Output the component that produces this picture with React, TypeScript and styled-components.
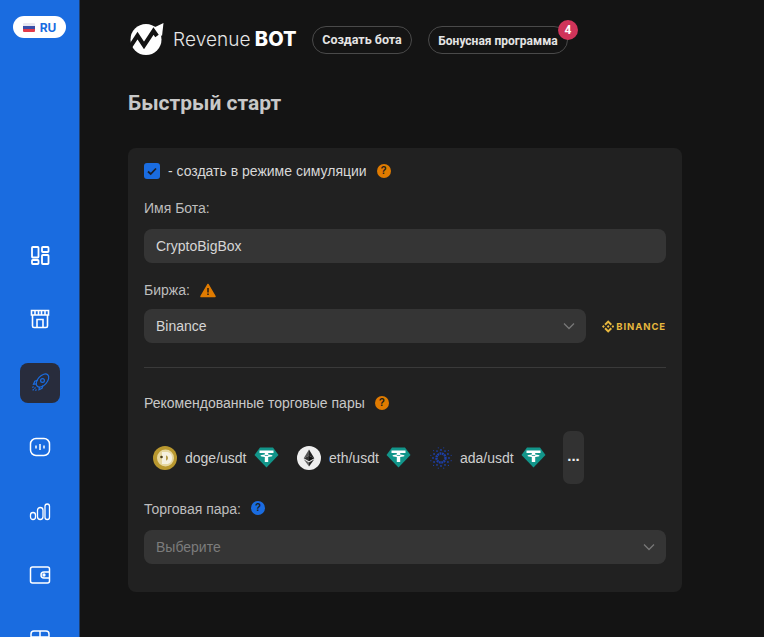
import React from "react";
import styled, { createGlobalStyle } from "styled-components";

const Global = createGlobalStyle`
  html, body { margin: 0; padding: 0; height: 100%; background: #141414; overflow: hidden; }
  #root { height: 100%; }
  * { box-sizing: border-box; }
`;

const Page = styled.div`
  display: flex;
  height: 637px;
  overflow: hidden;
  background: #141414;
  font-family: "Liberation Sans", Arial, sans-serif;
`;

const Sidebar = styled.aside`
  width: 80px;
  flex: none;
  height: 637px;
  overflow: hidden;
  background: #1a6ce0;
  border-right: 1px solid #1c3f73;
  padding-top: 16px;
  display: flex;
  flex-direction: column;
  align-items: center;
`;

const LangPill = styled.div`
  width: 53px;
  height: 22px;
  border-radius: 11px;
  background: #fff;
  display: flex;
  align-items: center;
  justify-content: center;
  gap: 5px;
  font: 700 12px "Inter", sans-serif;
  color: #1a6ce0;
  flex: none;
`;

const Flag = styled.span`
  width: 12px;
  height: 9px;
  border-radius: 1px;
  background: linear-gradient(#e8e8f0 0 33%, #3a4fa8 33% 66%, #e23a4a 66% 100%);
`;

const Nav = styled.nav`
  margin-top: 197px;
  display: flex;
  flex-direction: column;
  gap: 24px;
  flex: none;
`;

const NavItem = styled.div<{ $active?: boolean }>`
  width: 40px;
  height: 40px;
  border-radius: 8px;
  display: flex;
  align-items: center;
  justify-content: center;
  color: ${(p) => (p.$active ? "#1a6ce0" : "#fff")};
  background: ${(p) => (p.$active ? "#282c3c" : "transparent")};
`;

const Main = styled.main`
  flex: 1;
  min-width: 0;
  padding: 24px 0 0 48px;
`;

const Header = styled.header`
  display: flex;
  align-items: center;
  height: 30px;
`;

const Logo = styled.div`
  display: flex;
  align-items: center;
  width: 184px;
  flex: none;
  color: #fff;
`;

const LogoText = styled.span`
  margin-left: 9px;
  font: 300 19px/30px "Inter", sans-serif;
  color: #e6e6e6;
  letter-spacing: 0.1px;
  white-space: nowrap;
`;

const LogoBold = styled.b`
  font: 800 20px/30px "Inter", sans-serif;
  color: #fff;
  margin-left: 4px;
`;

const HeaderButton = styled.div`
  position: relative;
  height: 28px;
  margin-top: 1px;
  border: 1px solid #4a4a4a;
  border-radius: 14px;
  display: flex;
  align-items: center;
  justify-content: center;
  font: 700 12px "Roboto", sans-serif;
  color: #e4e4e4;
  white-space: nowrap;
`;

const CreateButton = styled(HeaderButton)`
  width: 100px;
  font-size: 12.5px;
`;

const BonusButton = styled(HeaderButton)`
  width: 140px;
  margin-left: 16px;
  padding-top: 2px;
`;

const Badge = styled.span`
  position: absolute;
  right: -11px;
  top: -7px;
  width: 20px;
  height: 20px;
  border-radius: 50%;
  background: #d0345a;
  color: #fff;
  font: 700 12px "Roboto", sans-serif;
  display: flex;
  align-items: center;
  justify-content: center;
`;

const Title = styled.h1`
  margin: 35px 0 0;
  font: 700 21px/28px "Roboto", sans-serif;
  color: #c8c8c8;
`;

const Card = styled.section`
  margin-top: 31px;
  width: 554px;
  height: 444px;
  background: #212121;
  border-radius: 8px;
  padding: 15px 16px 0;
  display: flex;
  flex-direction: column;
  color: #cfcfcf;
  font-size: 14px;
`;

const CheckRow = styled.div`
  display: flex;
  align-items: center;
  height: 16px;
  color: #d8d8d8;
`;

const CheckBox = styled.span`
  width: 16px;
  height: 16px;
  border-radius: 3px;
  background: #1a6ce0;
  display: flex;
  align-items: center;
  justify-content: center;
  margin-right: 8px;
  color: #1b1f2a;
`;

const Hint = styled.span<{ $blue?: boolean }>`
  width: 14px;
  height: 14px;
  border-radius: 50%;
  background: ${(p) => (p.$blue ? "#1a6ce0" : "#e07b00")};
  color: #1c1c1c;
  font: 700 10px/14px "Liberation Sans", sans-serif;
  text-align: center;
  flex: none;
  margin-top: ${(p) => (p.$blue ? "-2px" : "0")};
`;

const CheckHint = styled(Hint)`
  margin-left: 10px;
`;

const Label = styled.div`
  display: flex;
  align-items: center;
  gap: 10px;
  height: 16px;
  color: #bdbdbd;
`;

const NameLabel = styled(Label)`
  margin-top: 21px;
`;

const ExchangeLabel = styled(Label)`
  margin-top: 19px;
`;

const PairLabel = styled(Label)`
  margin-top: 17px;
`;

const Field = styled.div<{ $muted?: boolean }>`
  height: 34px;
  background: #353535;
  border-radius: 8px;
  padding: 0 12px;
  display: flex;
  align-items: center;
  justify-content: space-between;
  color: ${(p) => (p.$muted ? "#7c7c7c" : "#d6d6d6")};
`;

const NameField = styled(Field)`
  margin-top: 13px;
`;

const PairField = styled(Field)`
  margin-top: 13px;
`;

const ExchangeRow = styled.div`
  margin-top: 11px;
  display: flex;
  align-items: center;
  gap: 16px;
`;

const ExchangeField = styled(Field)`
  flex: 1;
`;

const Chevron = styled.span`
  color: #777;
  display: flex;
  margin-right: -2px;
`;

const BinanceLogo = styled.div`
  width: 64px;
  display: flex;
  align-items: center;
  gap: 2px;
  color: #e8b83e;
  font: 700 9.5px "Inter", sans-serif;
  letter-spacing: 0.9px;
  flex: none;
`;

const Divider = styled.hr`
  margin: 24px 0 0;
  border: 0;
  border-top: 1px solid #3a3a3a;
`;

const RecLabel = styled(Label)`
  margin-top: 27px;
  color: #c8c8c8;
`;

const Pairs = styled.div`
  margin-top: 20px;
  height: 53px;
  display: flex;
  align-items: center;
  padding-left: 9px;
`;

const Pair = styled.div<{ $w: number }>`
  width: ${(p) => p.$w}px;
  display: flex;
  align-items: center;
  flex: none;
  color: #cfcfcf;
`;

const PairName = styled.span`
  margin: 0 7px 0 8px;
  white-space: nowrap;
`;

const More = styled.div`
  width: 21px;
  height: 53px;
  border-radius: 7px;
  background: #323232;
  color: #eee;
  font: 700 15px/49px "Liberation Sans", sans-serif;
  text-align: center;
  flex: none;
`;

const icon = {
  width: 24,
  height: 24,
  viewBox: "0 0 24 24",
  fill: "none",
  stroke: "currentColor",
  strokeWidth: 1.5,
} as const;

const Dashboard = () => (
  <svg {...icon} strokeWidth={1.8}>
    <rect x="4" y="4" width="6.5" height="10.500" rx="0.800" />
    <rect x="14" y="4" width="6.500" height="5" rx="0.800" />
    <rect x="4" y="17" width="6.500" height="4" rx="0.800" />
    <rect x="14" y="12" width="6.500" height="9" rx="0.800" />
  </svg>
);

const Shop = () => (
  <svg {...icon} strokeWidth={1.6}>
    <path d="M3.500 3.500h17v4.500h-17z" />
    <path d="M7 3.500v4.500M10.500 3.500v4.500M13.500 3.500v4.500M17 3.500v4.500" />
    <path d="M4.500 8v11a1.500 1.500 0 0 0 1.500 1.500h12a1.500 1.500 0 0 0 1.500-1.500V8" />
    <path d="M9 20.500v-8h6v8" />
  </svg>
);

const Rocket = () => (
  <svg {...icon} strokeWidth={1.2}>
    <ellipse cx="14.500" cy="9.500" rx="4.600" ry="7.800" transform="rotate(42 14.500 9.500)" />
    <path d="M9.700 9.300 6.800 10.300l-1.300 3 3-.4M15 14.500l-1 2.800-3 1.500.4-3" />
    <circle cx="14.500" cy="9.500" r="1.900" />
    <path d="M7.500 16.500l-3.500 3.500M5.500 15.500l-1.500 1.500M8.500 18.500l-1.500 1.500" strokeDasharray="1.500 1" />
  </svg>
);

const Chat = () => (
  <svg {...icon}>
    <rect x="2.500" y="3.500" width="19" height="17" rx="5.500" />
    <path d="M8 10.500v3M12 9v6M16 10.500v3" />
  </svg>
);

const Bars = () => (
  <svg {...icon} strokeWidth={1.3}>
    <rect x="2.500" y="13.500" width="5" height="7" rx="2.500" />
    <rect x="9.500" y="8.500" width="5.500" height="12" rx="2.750" />
    <rect x="17" y="5" width="4.500" height="15.500" rx="2.250" />
  </svg>
);

const Wallet = () => (
  <svg {...icon}>
    <rect x="2.500" y="4" width="19" height="16" rx="2" />
    <path d="M21.500 9h-5.500a3 3 0 0 0 0 6h5.500" />
    <circle cx="16" cy="12" r="0.900" />
  </svg>
);

const Gift = () => (
  <svg {...icon}>
    <path d="M6 4h12a3 3 0 0 1 3 3v3H3V7a3 3 0 0 1 3-3z" />
    <path d="M4 10v11h16V10M12 4v17" />
  </svg>
);

const BrandMark = () => (
  <svg width="36" height="34" viewBox="0 0 36 34">
    <circle cx="18" cy="17.500" r="15.500" fill="#fff" />
    <path fill="#fff" d="M24 6.500 35.500 1 34 14z" />
    <path
      fill="none"
      stroke="#141414"
      strokeWidth="4.200"
      strokeLinejoin="miter"
      d="M0 28 9.500 13.500 16 23.500 25.500 9 29 14"
    />
  </svg>
);

const BinanceMark = () => (
  <svg width="13" height="13" viewBox="0 0 126.6 126.6" fill="currentColor">
    <path d="M38.700 53.200 63.300 28.600l24.600 24.600 14.300-14.300L63.300 0 24.400 38.900zM0 63.300l14.300-14.300 14.300 14.300-14.300 14.300zM38.700 73.400l24.600 24.600 24.600-24.600 14.300 14.300-38.900 38.900-38.900-38.900zM98 63.300l14.300-14.300 14.300 14.300-14.300 14.300zM77.800 63.300 63.300 48.800 52.600 59.500l-1.200 1.200-2.600 2.600 14.500 14.500z" />
  </svg>
);

const Warning = () => (
  <svg width="16" height="15" viewBox="0 0 16 15">
    <path fill="#e07b00" stroke="#e07b00" strokeLinejoin="round" strokeWidth="1.500" d="M8 1.500 1 13.500h14z" />
    <path stroke="#221a10" strokeWidth="1.500" d="M8 5v4.500M8 10.500v1.500" />
  </svg>
);

const Check = () => (
  <svg width="12" height="12" viewBox="0 0 12 12" fill="none" stroke="currentColor" strokeWidth="1.800">
    <path d="M2 6.500l2.700 2.500L10 3.500" />
  </svg>
);

const Down = () => (
  <svg width="14" height="14" viewBox="0 0 14 14" fill="none" stroke="currentColor" strokeWidth="1.300">
    <path d="M2 4.500l5 5 5-5" />
  </svg>
);

const Tether = () => (
  <svg width="25" height="21" viewBox="0 0 25 21">
    <path fill="#12958a" d="M6 .5h13l5.500 7.500L12.500 20.500.5 8z" />
    <path
      fill="#fff"
      d="M5.500 3.500h14v2.500h-5.300v1.500c2.400.1 4.300.6 4.300 1.200s-1.900 1.100-4.300 1.200v5.100h-3.400v-5.100c-2.400-.1-4.300-.6-4.300-1.200s1.900-1.100 4.300-1.200V6H5.500zM10.800 8.200v.8c.5 0 1.100.1 1.700.1s1.200 0 1.700-.1v-.8c-.5 0-1.100.1-1.700.1s-1.200 0-1.700-.1z"
    />
  </svg>
);

const Doge = () => (
  <svg width="24" height="24" viewBox="0 0 24 24">
    <circle cx="12" cy="12" r="12" fill="#b9982f" />
    <circle cx="12.500" cy="12" r="8.500" fill="#e6d7a0" />
    <path fill="#f5f0df" d="M9 6h4.500c3.500 0 5.500 2.500 5.500 6s-2 6-5.500 6H9z" />
    <path fill="#b59a48" d="M13 9.500c1.500.3 2 1.300 2 2.500s-.6 2.200-2 2.500z" />
    <circle cx="8.500" cy="11" r="1.300" fill="#4a3d18" />
  </svg>
);

const Eth = () => (
  <svg width="24" height="24" viewBox="0 0 24 24">
    <circle cx="12" cy="12" r="12" fill="#efefef" />
    <path fill="#555" d="M12 3.500v6.300l-5.300 2.400z" />
    <path fill="#222" d="M12 3.500l5.300 8.700L12 9.800z" />
    <path fill="#333" d="M6.700 12.200 12 9.800v5.500z" />
    <path fill="#111" d="M17.300 12.200 12 15.300V9.800z" />
    <path fill="#666" d="M6.700 13.300 12 16.400v4.100z" />
    <path fill="#222" d="M17.300 13.300 12 16.400v4.100z" />
  </svg>
);

const adaDots = Array.from({ length: 24 }, (_, i) => {
  const a = (i / 24) * Math.PI * 2;
  const r = i % 2 ? 10.5 : 8;
  return { x: 11 + Math.cos(a) * r, y: 12 + Math.sin(a) * r, s: i % 2 ? 0.6 : 0.9 };
});

const Ada = () => (
  <svg width="22" height="24" viewBox="0 0 22 24">
    {adaDots.map((d, i) => (
      <circle key={i} cx={d.x} cy={d.y} r={d.s} fill="#1d3fa8" />
    ))}
    <circle cx="11" cy="12" r="4.500" fill="none" stroke="#1d3fa8" strokeWidth="2.400" strokeDasharray="1.800 0.600" />
  </svg>
);

const pairs = [
  { name: "doge/usdt", coin: <Doge />, w: 144 },
  { name: "eth/usdt", coin: <Eth />, w: 133 },
  { name: "ada/usdt", coin: <Ada />, w: 133 },
];

export default function App() {
  return (
    <Page>
      <Global />
      <Sidebar>
        <LangPill>
          <Flag />
          RU
        </LangPill>
        <Nav>
          <NavItem><Dashboard /></NavItem>
          <NavItem><Shop /></NavItem>
          <NavItem $active><Rocket /></NavItem>
          <NavItem><Chat /></NavItem>
          <NavItem><Bars /></NavItem>
          <NavItem><Wallet /></NavItem>
          <NavItem><Gift /></NavItem>
        </Nav>
      </Sidebar>
      <Main>
        <Header>
          <Logo>
            <BrandMark />
            <LogoText>Revenue<LogoBold>BOT</LogoBold></LogoText>
          </Logo>
          <CreateButton>Создать бота</CreateButton>
          <BonusButton>
            Бонусная программа
            <Badge>4</Badge>
          </BonusButton>
        </Header>
        <Title>Быстрый старт</Title>
        <Card>
          <CheckRow>
            <CheckBox><Check /></CheckBox>
            - создать в режиме симуляции
            <CheckHint>?</CheckHint>
          </CheckRow>
          <NameLabel>Имя Бота:</NameLabel>
          <NameField>CryptoBigBox</NameField>
          <ExchangeLabel>Биржа: <Warning /></ExchangeLabel>
          <ExchangeRow>
            <ExchangeField>
              Binance
              <Chevron><Down /></Chevron>
            </ExchangeField>
            <BinanceLogo>
              <BinanceMark />
              BINANCE
            </BinanceLogo>
          </ExchangeRow>
          <Divider />
          <RecLabel>Рекомендованные торговые пары <Hint>?</Hint></RecLabel>
          <Pairs>
            {pairs.map((p) => (
              <Pair key={p.name} $w={p.w}>
                {p.coin}
                <PairName>{p.name}</PairName>
                <Tether />
              </Pair>
            ))}
            <More>...</More>
          </Pairs>
          <PairLabel>Торговая пара: <Hint $blue>?</Hint></PairLabel>
          <PairField $muted>
            Выберите
            <Chevron><Down /></Chevron>
          </PairField>
        </Card>
      </Main>
    </Page>
  );
}
